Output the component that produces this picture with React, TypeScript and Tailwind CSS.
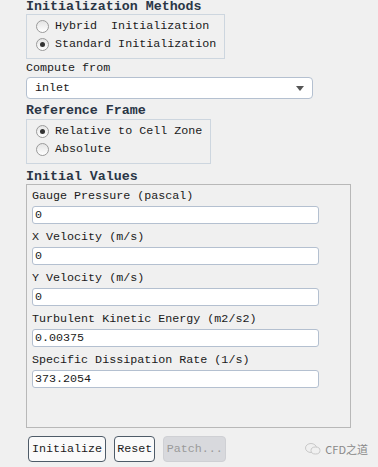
import React from 'react';

const mono = { fontFamily: '"Liberation Mono", "Noto Sans CJK SC", monospace' };

const Radio: React.FC<{ checked?: boolean; label: string }> = ({ checked, label }) => (
  <div className="flex items-center h-[18px]">
    <span className="w-[13px] h-[13px] rounded-full border border-[#9a9a9a] bg-gradient-to-b from-[#e4e4e4] to-white flex items-center justify-center">
      {checked && <span className="w-[5px] h-[5px] rounded-full bg-[#333]"></span>}
    </span>
    <span className="ml-[6px] whitespace-pre">{label}</span>
  </div>
);

const Field: React.FC<{ label: string; value: string }> = ({ label, value }) => (
  <div className="mb-[2px]">
    <div className="h-[21px] flex items-center">{label}</div>
    <div className="w-[287px] h-[18px] rounded-[3px] border border-[#b4c0d0] bg-white flex items-center pl-[2px]">
      {value}
    </div>
  </div>
);

const App: React.FC = () => {
  return (
    <div
      className="w-[378px] h-[467px] bg-[#f0f0f0] text-[#1a1a1a] text-[11.7px] leading-[14px] overflow-hidden pl-[26px]"
      style={mono}
    >
      {/* 初期化方法 */}
      <div className="h-[14px] text-[13.3px] font-bold text-[#2a3646]">
        Initialization Methods
      </div>
      <div className="w-[199px] h-[45px] border border-[#cdd6df] pt-[2px] pl-[9px]">
        <Radio label="Hybrid  Initialization" />
        <Radio checked label="Standard Initialization" />
      </div>

      <div className="mt-[2px] h-[14px]">Compute from</div>
      <div className="mt-[2px] w-[287px] h-[22px] rounded-[4px] border border-[#b4c0d0] bg-white flex items-center justify-between pl-[8px] pr-[8px]">
        <span>inlet</span>
        <span className="w-0 h-0 border-l-[4px] border-r-[4px] border-t-[5px] border-l-transparent border-r-transparent border-t-[#555]"></span>
      </div>

      {/* 参照フレーム */}
      <div className="mt-[5px] h-[14px] text-[13.3px] font-bold text-[#2a3646]">
        Reference Frame
      </div>
      <div className="w-[185px] h-[45px] mt-[1px] border border-[#cdd6df] pt-[2px] pl-[9px]">
        <Radio checked label="Relative to Cell Zone" />
        <Radio label="Absolute" />
      </div>

      {/* 初期値 */}
      <div className="mt-[6px] h-[14px] text-[13.3px] font-bold text-[#2a3646]">
        Initial Values
      </div>
      <div className="w-[325px] h-[244px] border border-[#b8b8b8] pl-[5px]">
        <Field label="Gauge Pressure (pascal)" value="0" />
        <Field label="X Velocity (m/s)" value="0" />
        <Field label="Y Velocity (m/s)" value="0" />
        <Field label="Turbulent Kinetic Energy (m2/s2)" value="0.00375" />
        <Field label="Specific Dissipation Rate (1/s)" value="373.2054" />
      </div>

      {/* ボタン */}
      <div className="mt-[8px] flex items-center">
        <button className="ml-[2px] h-[26px] px-[3px] rounded-[4px] border border-[#4e5b68] bg-[#fafafa]">
          Initialize
        </button>
        <button className="ml-[8px] h-[26px] px-[2px] rounded-[4px] border border-[#4e5b68] bg-[#fafafa]">
          Reset
        </button>
        <button className="ml-[8px] h-[26px] w-[63px] rounded-[4px] border border-[#cfd0d4] bg-[#d8d9dd] text-[#9a9a9a]">
          Patch...
        </button>
        <div className="ml-auto mr-[10px] flex items-center text-[#888] text-[11px]">
          <svg width="16" height="12" viewBox="0 0 16 12" className="mr-[4px]">
            <ellipse cx="6" cy="5" rx="5.5" ry="4.5" fill="none" stroke="#c8c8c8" strokeWidth="1" />
            <ellipse cx="10.5" cy="7.5" rx="4.5" ry="3.5" fill="#f0f0f0" stroke="#c8c8c8" strokeWidth="1" />
          </svg>
          <span style={{ fontFamily: '"Noto Sans CJK SC", sans-serif' }}>CFD之道</span>
        </div>
      </div>
    </div>
  );
};

export default App;
